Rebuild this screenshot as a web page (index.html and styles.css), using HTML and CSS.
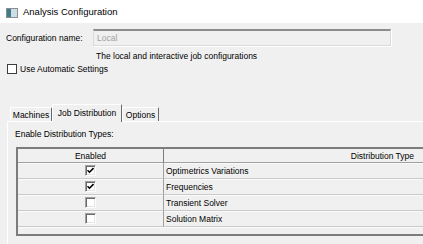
FILE: index.html
```html
<!DOCTYPE html>
<html lang="en">
  <head>
    <meta charset="UTF-8" />
    <title>Analysis Configuration</title>
    <link rel="stylesheet" href="styles.css">
  </head>
  <body>
    <div class="titlebar">
      <svg class="app-icon" width="12" height="10" viewBox="0 0 12 10">
        <rect x="0.5" y="0.5" width="11" height="9" fill="#dfe7ee" stroke="#8a8f96" />
        <rect x="1" y="1" width="4" height="8" fill="#3f7d86" />
        <rect x="5" y="1" width="6" height="8" fill="#cfdde6" />
      </svg>
      <span>Analysis Configuration</span>
    </div>

    <div class="main">
      <div class="name-row">
        <label for="config-name">Configuration name:</label>
        <input id="config-name" class="name-input" type="text" placeholder="Local" disabled />
      </div>
      <p class="hint">The local and interactive job configurations</p>

      <label class="auto-row">
        <span class="check flat"></span>
        Use Automatic Settings
      </label>

      <div class="tabs">
        <div class="tab tab-machines">Machines</div>
        <div class="tab tab-jobs active">Job Distribution</div>
        <div class="tab tab-options">Options</div>
      </div>

      <div class="panel">
        <p class="panel-label">Enable Distribution Types:</p>

        <div class="grid">
          <div class="cell head col-enabled">Enabled</div>
          <div class="cell head col-type">Distribution Type</div>

          <div class="cell col-enabled"><span class="check"><svg width="7" height="7" viewBox="0 0 7 7"><path d="M0.5 3.2 L2.5 5.2 L6.5 1" stroke="#000" stroke-width="1.6" fill="none" /></svg></span></div>
          <div class="cell col-type">Optimetrics Variations</div>

          <div class="cell col-enabled"><span class="check"><svg width="7" height="7" viewBox="0 0 7 7"><path d="M0.5 3.2 L2.5 5.2 L6.5 1" stroke="#000" stroke-width="1.6" fill="none" /></svg></span></div>
          <div class="cell col-type">Frequencies</div>

          <div class="cell col-enabled"><span class="check"></span></div>
          <div class="cell col-type">Transient Solver</div>

          <div class="cell col-enabled"><span class="check"></span></div>
          <div class="cell col-type">Solution Matrix</div>

          <div class="filler"></div>
        </div>
      </div>
    </div>
  </body>
</html>
```

FILE: styles.css
```css
* {
  box-sizing: border-box;
}

html,
body {
  margin: 0;
}

body {
  width: 423px;
  height: 244px;
  overflow: hidden;
  background: #f0f0f0;
  font-family: "Liberation Sans", Arial, sans-serif;
  font-size: 8.5px;
  color: #000;
}

p {
  margin: 0;
}

.titlebar {
  height: 23px;
  background: #fff;
  display: flex;
  align-items: center;
  gap: 5px;
  padding-left: 6px;
  font-size: 9.5px;
}

.app-icon {
  margin-top: 2px;
}

.main {
  padding-left: 6px;
}

.name-row {
  display: flex;
  align-items: center;
  height: 17px;
  margin-top: 6px;
}

.name-row label {
  width: 87px;
}

.name-input {
  width: 298px;
  height: 17px;
  padding: 0 3px;
  border: 1px solid #dadada;
  border-top: 2px solid #8c8c8c;
  background: #f0f0f0;
  box-shadow: 1px 1px 0 #fff;
  font: inherit;
  color: #a0a0a0;
}

.name-input::placeholder {
  color: #a0a0a0;
}

.hint {
  margin: 5px 0 0 90px;
  line-height: 10px;
}

.auto-row {
  display: flex;
  align-items: center;
  gap: 3px;
  height: 11px;
  margin-top: 2px;
  padding-left: 1px;
}

.check {
  width: 11px;
  height: 11px;
  display: flex;
  align-items: center;
  justify-content: center;
  background: #fff;
  border: 1px solid;
  border-color: #a0a0a0 #fff #fff #a0a0a0;
  box-shadow: inset 1px 1px 0 #696969, inset -1px -1px 0 #e3e3e3;
}

.check.flat {
  width: 10px;
  height: 10px;
  border: 1px solid #3c3c3c;
  box-shadow: none;
}

.tabs {
  display: flex;
  align-items: flex-end;
  height: 17px;
  margin: 30px 0 0 4px;
}

.tab {
  height: 14px;
  display: flex;
  align-items: center;
  justify-content: center;
  border-left: 1px solid #fff;
  border-top: 1px solid #fff;
  border-right: 1px solid #696969;
  border-radius: 1px 1px 0 0;
  background: #f0f0f0;
}

.tab-machines {
  width: 42px;
}

.tab-jobs {
  width: 70px;
}

.tab-options {
  width: 37px;
}

.tab.active {
  height: 18px;
  margin-bottom: -1px;
  padding-bottom: 2px;
  position: relative;
  z-index: 1;
}

.panel {
  height: 130px;
  margin-left: 1px;
  border-left: 1px solid #fff;
  border-top: 1px solid #fff;
}

.panel-label {
  padding: 7px 0 0 7px;
  line-height: 10px;
}

.grid {
  display: grid;
  grid-template-columns: 146px 266px;
  grid-template-rows: 14px repeat(4, 16px) 7px;
  width: 414px;
  margin: 8px 0 0 8px;
  border: 2px solid #7c7c7c;
}

.cell {
  display: flex;
  align-items: center;
  border-bottom: 1px solid #cacaca;
  box-shadow: inset 0 1px 0 #fafafa;
}

.cell.head {
  border-bottom: 1px solid #a0a0a0;
  box-shadow: none;
}

.col-enabled {
  justify-content: center;
  border-right: 1px solid #a0a0a0;
}

.head.col-enabled {
  border-right-color: #7c7c7c;
}

.col-type {
  padding-left: 2px;
}

.head.col-type {
  justify-content: flex-end;
  padding-right: 16px;
}

.filler {
  grid-column: 1 / 3;
  box-shadow: inset 0 1px 0 #fafafa;
}
```
